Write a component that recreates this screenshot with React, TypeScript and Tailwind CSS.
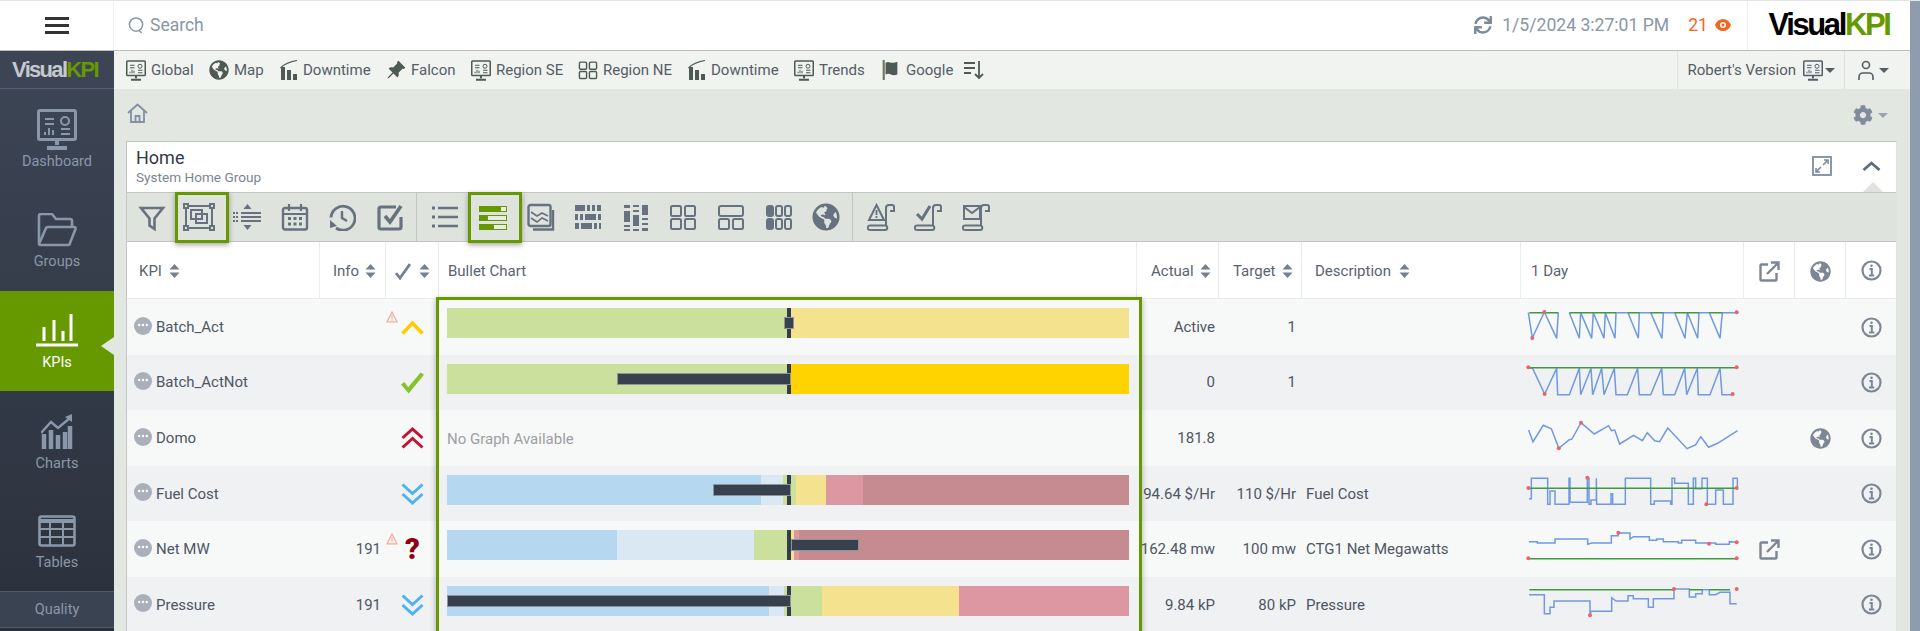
import type { ReactNode } from "react";
import { FaCog, FaGlobeAmericas, FaSync } from "react-icons/fa";
import { BsPinAngleFill } from "react-icons/bs";

const COLS = "grid grid-cols-[193px_66px_53px_698px_82px_83px_219px_223px_51px_51px_50px]";

function Svg({ s, h, vb, children, className }: { s: number; h?: number; vb: string; children: ReactNode; className?: string }) {
  return (
    <svg width={s} height={h ?? s} viewBox={vb} fill="none" stroke="currentColor" strokeWidth={2} className={className}>
      {children}
    </svg>
  );
}

function Monitor({ s, h }: { s: number; h: number }) {
  return (
    <Svg s={s} h={h} vb="0 0 40 41" className="shrink-0">
      <rect x="1.5" y="1.5" width="37" height="29" rx="1.5" strokeWidth="3" />
      <path d="M20 31v5M10 39h20" strokeWidth="4" />
      <path d="M8 10h9M8 15h9M24 20h9M24 25h9" strokeWidth="2" />
      <circle cx="28" cy="12" r="4" strokeWidth="2" />
      <path d="M8 26v-3M12 26v-7M16 26v-5" strokeWidth="2" />
    </Svg>
  );
}

function Bars() {
  return (
    <Svg s={18} h={20} vb="0 0 18 20" className="shrink-0">
      <path d="M3 20V7M9 20V10M15 20v-6" strokeWidth="4" />
      <path d="M0.5 8C4 4 9 2 17 0.5" strokeWidth="1.2" />
    </Svg>
  );
}

function Grid4({ s }: { s: number }) {
  return (
    <Svg s={s} vb="0 0 28 28" className="shrink-0">
      <rect x="2" y="3" width="10" height="10" rx="1.5" />
      <rect x="16" y="3" width="10" height="10" rx="1.5" />
      <rect x="2" y="16" width="10" height="10" rx="1.5" />
      <rect x="16" y="16" width="10" height="10" rx="1.5" />
    </Svg>
  );
}

function Sort() {
  return (
    <svg width="11" height="14" viewBox="0 0 11 14" className="shrink-0 text-[#76808e]" fill="currentColor">
      <path d="M5.5 0 10.5 5.5H.5zM5.5 14 .5 8.5h10z" />
    </svg>
  );
}

function Caret({ className }: { className: string }) {
  return <span className={`h-0 w-0 border-x-[5px] border-t-[5px] border-x-transparent ${className}`} />;
}

function InfoIcon() {
  return (
    <Svg s={21} vb="0 0 21 21" className="text-[#7c8694]">
      <circle cx="10.5" cy="10.5" r="9" strokeWidth="2.2" />
      <path d="M8.5 9h2.3v6M8 15.5h5.2" strokeWidth="2" />
      <circle cx="10.5" cy="5.8" r="1.3" fill="currentColor" stroke="none" />
    </Svg>
  );
}

function External() {
  return (
    <Svg s={21} vb="0 0 21 21" className="text-[#7c8694]">
      <path d="M17.5 12v6.5a1 1 0 0 1-1 1h-14a1 1 0 0 1-1-1v-14a1 1 0 0 1 1-1H9" strokeWidth="2.4" />
      <path d="M8 13 18.5 2.5M12 1.5h7.5V9" strokeWidth="2.4" />
    </Svg>
  );
}

function Warn() {
  return (
    <Svg s={12} vb="0 0 12 12" className="mb-5 shrink-0 text-[#f7a898]">
      <path d="M6 1 11 10.8H1z" strokeWidth="1.2" />
      <path d="M6 4.2v3.6M6 8.6v1" strokeWidth="1.2" />
    </Svg>
  );
}

function Status({ kind }: { kind: string }) {
  if (kind === "up") {
    return (
      <Svg s={23} h={15} vb="0 0 23 15" className="text-[#ffcc00]">
        <path d="M1.5 13.5 11.5 3l10 10.5" strokeWidth="3.6" />
      </Svg>
    );
  }
  if (kind === "check") {
    return (
      <svg width="24" height="22" viewBox="0 0 24 22" className="text-[#85c32a]" fill="currentColor">
        <path d="M0 12.5 3.5 10l4 5.5L20.5 0 24 2.5 8 22z" />
      </svg>
    );
  }
  if (kind === "q") {
    return <span className="font-['Roboto',sans-serif] text-[29px] leading-none font-black text-[#8b0015]">?</span>;
  }
  const up = kind === "dup";
  return (
    <Svg s={23} h={22} vb="0 0 23 22" className={up ? "text-[#c01530]" : "text-[#4fb2f0]"}>
      {up ? <path d="M1.5 11 11.5 2l10 9M1.5 20.5l10-9 10 9" strokeWidth="3" /> : <path d="M1.5 1.5l10 9 10-9M1.5 11l10 9 10-9" strokeWidth="3" />}
    </Svg>
  );
}

function DotsCircle() {
  return (
    <svg width="18" height="18" viewBox="0 0 18 18" className="mb-[3px] shrink-0">
      <circle cx="9" cy="9" r="9" fill="#aab0ba" />
      <circle cx="5.2" cy="8" r="1.2" fill="#fff" />
      <circle cx="9" cy="8" r="1.2" fill="#fff" />
      <circle cx="12.8" cy="8" r="1.2" fill="#fff" />
    </svg>
  );
}

const tools: ReactNode[] = [
  <path key="f" d="M3 5h22l-8.5 10.5V26l-5-3.5v-7z" strokeWidth="2.6" />,
  <g key="s">
    <rect x="3" y="3" width="26" height="22" />
    <rect x="1" y="1" width="4" height="4" fill="#dfe3de" />
    <rect x="27" y="1" width="4" height="4" fill="#dfe3de" />
    <rect x="1" y="23" width="4" height="4" fill="#dfe3de" />
    <rect x="27" y="23" width="4" height="4" fill="#dfe3de" />
    <rect x="8" y="7" width="11" height="9" />
    <rect x="13" y="11" width="11" height="9" />
  </g>,
  <g key="r">
    <path d="M8 10h20M8 14h20M8 18h20" strokeWidth="2.2" />
    <path d="M0 10h5M0 14h5M0 18h5" strokeWidth="2.2" strokeDasharray="2 1" />
    <path d="M14.5 1 10.5 6h8zM14.5 27l-4-5h8z" fill="currentColor" stroke="none" />
  </g>,
  <g key="c">
    <rect x="2" y="5" width="24" height="21.5" rx="2" strokeWidth="2.4" />
    <path d="M8 1v7M20 1v7M2 11h24" strokeWidth="2.2" />
    <path d="M7 15.5h3M12.5 15.5h3M18 15.5h3M7 21h3M12.5 21h3M18 21h3" strokeWidth="3" />
  </g>,
  <g key="h">
    <path d="M8 25A12 12 0 1 0 3 14.5" strokeWidth="2.8" />
    <path d="M2 17l0 8 7-2z" fill="currentColor" stroke="none" />
    <path d="M14 8v7l5 3" strokeWidth="2.4" />
  </g>,
  <g key="k">
    <path d="M25 14v10a2 2 0 0 1-2 2H5a2 2 0 0 1-2-2V6a2 2 0 0 1 2-2h15" strokeWidth="3.2" />
    <path d="M9 13l5 6L25 3" strokeWidth="3.6" />
  </g>,
];

const views: ReactNode[] = [
  <g key="l">
    <path d="M7 5h20M7 14h20M7 23h20" strokeWidth="2.6" />
    <path d="M1 5h3M1 14h3M1 23h3" strokeWidth="2.8" />
  </g>,
  <g key="b" stroke="#669900" strokeWidth="1">
    <rect x="0.5" y="3.5" width="27" height="5" fill="#e8ece6" />
    <rect x="0.5" y="3.5" width="21" height="5" rx="1.5" fill="#669900" />
    <rect x="0.5" y="12.5" width="27" height="5" fill="#e8ece6" />
    <rect x="0.5" y="12.5" width="8" height="5" rx="1.5" fill="#669900" />
    <rect x="0.5" y="21.5" width="27" height="5" fill="#e8ece6" />
    <rect x="0.5" y="21.5" width="14" height="5" rx="1.5" fill="#669900" />
  </g>,
  <g key="t">
    <rect x="1.5" y="2" width="22" height="21" rx="2" strokeWidth="2.4" />
    <path d="M6 26.5h20V7" strokeWidth="2.4" />
    <path d="M4 9l6 4 5-3 6 3M4 15l6 4 5-4 6 3" strokeWidth="1.6" />
  </g>,
  <g key="bc1" fill="currentColor" stroke="none">
    <rect x="1" y="2" width="10" height="6" />
    <rect x="13" y="2" width="3" height="6" />
    <rect x="18" y="2" width="3" height="6" />
    <rect x="23" y="2" width="4" height="6" />
    <rect x="1" y="11" width="3" height="6" />
    <rect x="6" y="11" width="3" height="6" />
    <rect x="11" y="11" width="11" height="6" />
    <rect x="24" y="11" width="3" height="6" />
    <rect x="1" y="20" width="4" height="6" />
    <rect x="7" y="20" width="11" height="6" />
    <rect x="20" y="20" width="3" height="6" />
    <rect x="25" y="20" width="2" height="6" />
  </g>,
  <g key="bc2" fill="currentColor" stroke="none">
    <rect x="2" y="2" width="6" height="3" />
    <rect x="2" y="8" width="6" height="11" />
    <rect x="2" y="22" width="6" height="2" />
    <rect x="2" y="26" width="6" height="2" />
    <rect x="11" y="2" width="6" height="2" />
    <rect x="11" y="7" width="6" height="2" />
    <rect x="11" y="12" width="6" height="11" />
    <rect x="11" y="26" width="6" height="2" />
    <rect x="20" y="2" width="6" height="10" />
    <rect x="20" y="15" width="6" height="2" />
    <rect x="20" y="20" width="6" height="2" />
    <rect x="20" y="25" width="6" height="3" />
  </g>,
  null,
  <g key="g12">
    <rect x="2" y="3" width="24" height="10" rx="2" />
    <rect x="2" y="16" width="10" height="10" rx="1.5" />
    <rect x="16" y="16" width="10" height="10" rx="1.5" />
  </g>,
  <g key="g6">
    <rect x="2" y="3" width="6" height="10" rx="2" fill="currentColor" />
    <rect x="11" y="3" width="6" height="10" rx="2" />
    <rect x="20" y="3" width="6" height="10" rx="2" />
    <rect x="2" y="16" width="6" height="10" rx="2" fill="currentColor" />
    <rect x="11" y="16" width="6" height="10" rx="2" />
    <rect x="20" y="16" width="6" height="10" rx="2" />
  </g>,
];

const scrollBase = "M19 22.5V5a3 3 0 0 1 3-3h3a2 2 0 0 1 2 2v4h-4M3 22.5h15a1.5 1.5 0 0 1 0 4.5H3a1.5 1.5 0 0 1 0-4.5z";
const alerts: ReactNode[] = [
  <g key="a1">
    <path d={scrollBase} strokeWidth="2" />
    <path d="M9.5 2 17 17H2z" fill="#dfe3de" strokeWidth="2" />
    <path d="M9.5 7v5M9.5 13v2" strokeWidth="1.8" />
  </g>,
  <g key="a2">
    <path d={scrollBase} strokeWidth="2" />
    <path d="M3 11l5 5L16 3" strokeWidth="3" />
  </g>,
  <g key="a3">
    <path d={scrollBase} strokeWidth="2" />
    <rect x="2" y="3" width="16" height="13" fill="#dfe3de" />
    <path d="M2 4l8 6 8-6" />
  </g>,
];

function ToolBtn({ children, mark }: { children: ReactNode; mark?: boolean }) {
  return (
    <div className="relative flex h-full w-[47.6px] shrink-0 items-center justify-center text-[#66727f]">
      {children}
      {mark && <span className="absolute -top-px -left-px z-10 h-[51px] w-[54px] border-[3px] border-[#669900] shadow-[0_2px_5px_rgba(0,0,0,0.35)]" />}
    </div>
  );
}

const sideItems = [
  { label: "Dashboard", box: "h-[102px] pt-5 gap-px", icon: <Monitor s={40} h={41} /> },
  {
    label: "Groups",
    box: "h-[100px] pt-[22px] gap-[4px]",
    icon: (
      <Svg s={40} h={34} vb="0 0 40 34">
        <path d="M2 30V3a2 2 0 0 1 2-2h11l4 5h14a2 2 0 0 1 2 2v5" strokeWidth="2.6" />
        <path d="M2 31 9 15a2 2 0 0 1 2-1h26a1.5 1.5 0 0 1 1.5 2L33 30a2 2 0 0 1-2 2H4a2 2 0 0 1-2-1z" strokeWidth="2.6" />
      </Svg>
    ),
  },
  {
    label: "KPIs",
    active: true,
    box: "h-[100px] pt-[23px] gap-[5px]",
    icon: (
      <Svg s={42} h={33} vb="0 0 42 33" className="text-white">
        <path d="M8 27V13M18 27V6M27 27V17M35 27V0M0 31h42" strokeWidth="3" />
      </Svg>
    ),
  },
  {
    label: "Charts",
    box: "h-[100px] pt-[23px] gap-[4px]",
    icon: (
      <Svg s={32} h={35} vb="0 0 32 35">
        <path d="M3 35V20M10 35V16M17 35V21M24 35V18M29 35V12" strokeWidth="4.5" />
        <path d="M0 19 10 8l7 6L29 4" strokeWidth="2.4" stroke="#8a98ad" />
        <path d="M24 3l7-3v8z" fill="currentColor" stroke="none" />
      </Svg>
    ),
  },
  {
    label: "Tables",
    box: "h-[100px] pt-6 gap-[5px]",
    icon: (
      <Svg s={38} h={32} vb="0 0 38 32">
        <rect x="1.5" y="1.5" width="35" height="29" rx="2" strokeWidth="2.6" />
        <path d="M1.5 6h35" strokeWidth="4" />
        <path d="M1.5 14h35M1.5 22h35M12 6v24M25 6v24" strokeWidth="2" />
      </Svg>
    ),
  },
];

const navItems = [
  { t: "Global", i: <Monitor s={20} h={21} />, w: 83 },
  { t: "Map", i: <FaGlobeAmericas size={20} className="shrink-0" />, w: 71 },
  { t: "Downtime", i: <Bars />, w: 106 },
  { t: "Falcon", i: <BsPinAngleFill size={20} className="shrink-0" />, w: 85 },
  { t: "Region SE", i: <Monitor s={20} h={21} />, w: 107 },
  { t: "Region NE", i: <Grid4 s={20} />, w: 110 },
  { t: "Downtime", i: <Bars />, w: 106 },
  { t: "Trends", i: <Monitor s={20} h={21} />, w: 87 },
  { t: "Google", i: (
    <Svg s={20} vb="0 0 20 22" className="shrink-0">
      <path d="M2 0v22" strokeWidth="2.4" stroke="#6a7a5e" />
      <path d="M4 3c3-2 5 0 7 0s4 0 6-1v14c-3 1-5 1-7 0s-4-1-6 0z" fill="currentColor" stroke="none" />
    </Svg>
  ), w: 84 },
];

type Bar = {
  segs: [string, number][];
  actual: [number, number];
};

const GREEN = "bg-[#cbe09c]";
const YELLOW = "bg-[#f5e28f]";
const GOLD = "bg-[#ffd300]";
const BLUE = "bg-[#b5d7f0]";
const LIGHT = "bg-[#dae8f3]";
const PINK = "bg-[#dc97a3]";
const RED = "bg-[#c58b90]";

const rows: {
  name: string;
  info?: string;
  warn?: boolean;
  status: string;
  bar?: Bar;
  actual: string;
  target?: string;
  desc?: string;
  ext?: boolean;
  globe?: boolean;
  spark: ReactNode;
}[] = [
  {
    name: "Batch_Act",
    warn: true,
    status: "up",
    bar: { segs: [[GREEN, 344], [YELLOW, 338]], actual: [337, 10] },
    actual: "Active",
    target: "1",
    spark: (
      <Spark
        top={-3}
        blue="55,38 67,114 103,36 140,115 145,38 M178,38 208,115 212,38 245,115 250,38 282,115 286,38 315,115 318,38 354,38 385,115 388,38 422,38 456,115 460,38 494,38 525,115 532,38 563,115 567,38 598,38 630,115 637,38 680,38"
        green="M58,38H145M178,38H318M354,38H388M422,38H460M494,38H567M598,38H637"
        dots={[[67, 114], [103, 36], [680, 37]]}
      />
    ),
  },
  {
    name: "Batch_ActNot",
    status: "check",
    bar: { segs: [[GREEN, 344], [GOLD, 338]], actual: [170, 174] },
    actual: "0",
    target: "1",
    spark: (
      <Spark
        top={165}
        blue="55,203 68,205 104,282 140,205 143,284 178,284 208,205 212,284 243,205 248,284 275,205 282,284 313,205 318,284 352,284 383,205 388,284 422,284 455,205 460,284 494,284 524,205 530,284 562,205 565,284 600,284 630,205 636,284 668,284"
        green="M55,203H680"
        dots={[[55, 202], [104, 282], [668, 282], [680, 202]]}
      />
    ),
  },
  {
    name: "Domo",
    status: "dup",
    actual: "181.8",
    globe: true,
    spark: (
      <svg width="223" height="56" viewBox="0 0 223 56" fill="none">
        <polyline
          points="7.6,20 12,31.7 22.3,15.3 30.4,18.7 37.8,38.3 48,30 51,29 60,12.7 73.3,24 87.6,15.7 90.4,20.7 93.7,20 98.6,34 112.5,25.3 121.4,30.7 126.3,22.7 133.7,30.7 138.6,31.7 146.8,18 166,38.7 174.5,35 179.8,26.7 187.6,37.3 196.6,33.3 216.6,20.7"
          stroke="#7099e0"
          strokeWidth="1.5"
        />
        <circle cx="60" cy="12.7" r="2" fill="#f0606a" />
        <circle cx="37.8" cy="38.3" r="2" fill="#f0606a" />
      </svg>
    ),
  },
  {
    name: "Fuel Cost",
    status: "ddown",
    bar: { segs: [[BLUE, 314], [LIGHT, 22], [GREEN, 13], [YELLOW, 30], [PINK, 37], [RED, 266]], actual: [266, 78] },
    actual: "94.64 $/Hr",
    target: "110 $/Hr",
    desc: "Fuel Cost",
    spark: (
      <Spark
        top={-10}
        blue="57,88 64,88 64,27 113,27 113,105 120,105 120,65 135,65 135,105 177,105 177,27 180,27 180,99 232,99 232,27 237,27 237,105 243,105 243,92 259,92 259,27 260,105 303,105 303,73 308,73 308,105 346,105 346,27 422,27 422,105 433,105 433,95 482,95 482,105 486,105 486,27 494,27 494,42 535,42 535,105 550,105 550,27 557,27 557,58 576,58 576,27 592,27 592,105 617,105 617,62 640,62 640,105 669,105 669,27 682,27 682,60"
        green="M55,57H680"
        dots={[[55, 56], [232, 25], [589, 105], [680, 56]]}
      />
    ),
  },
  {
    name: "Net MW",
    info: "191",
    warn: true,
    status: "q",
    bar: { segs: [[BLUE, 170], [LIGHT, 137], [GREEN, 37], [YELLOW, 3], [PINK, 5], [RED, 330]], actual: [344, 68] },
    actual: "162.48 mw",
    target: "100 mw",
    desc: "CTG1 Net Megawatts",
    ext: true,
    spark: (
      <Spark
        top={158}
        blue="57,220 82,220 82,224 135,224 135,212 233,212 233,228 245,224 304,224 304,202 325,202 325,194 360,194 360,212 370,205 418,205 418,216 440,216 440,212 460,212 460,220 505,220 505,224 515,224 515,216 557,216 557,224 617,224 617,228 658,228 658,220 680,222"
        green="M55,271H680"
        dots={[[325, 193], [597, 226], [680, 222], [55, 270], [680, 270]]}
      />
    ),
  },
  {
    name: "Pressure",
    info: "191",
    status: "ddown",
    bar: { segs: [[BLUE, 322], [LIGHT, 15], [GREEN, 38], [YELLOW, 137], [PINK, 170]], actual: [0, 344] },
    actual: "9.84 kP",
    target: "80 kP",
    desc: "Pressure",
    spark: (
      <Spark
        top={322}
        blue="57,375 103,375 103,432 120,432 120,413 132,413 132,394 240,394 240,437 243,425 305,425 305,384 318,394 354,394 354,378 370,378 370,387 415,387 415,413 430,413 430,387 492,387 492,358 538,358 538,382 557,382 557,372 577,372 577,360 598,360 598,375 617,375 630,368 660,368 660,402 680,402"
        green="M58,360H492M538,360H577M598,360H660"
        dots={[[492, 358], [240, 437], [680, 358]]}
      />
    ),
  },
];

function Spark({ top, blue, green, dots }: { top: number; blue: string; green: string; dots: number[][] }) {
  const parts = blue.split("M").filter(Boolean);
  return (
    <svg width="223" height="56" viewBox={`33 ${top} 669 168`} fill="none" className="block">
      {parts.map((p) => (
        <polyline key={p} points={p} stroke="#7099e0" strokeWidth="4.5" />
      ))}
      <path d={green} stroke="#3f9a3f" strokeWidth="4.5" />
      {dots.map(([x, y]) => (
        <circle key={`${x}-${y}`} cx={x} cy={y} r="6" fill="#f0606a" />
      ))}
    </svg>
  );
}

function Bullet({ bar }: { bar: Bar }) {
  return (
    <div className="relative mt-[9px] ml-2 flex h-[30px] w-[682px]">
      {bar.segs.map(([c, w], i) => (
        <div key={i} className={c} style={{ width: w }} />
      ))}
      <div className="absolute top-0 left-[340px] h-full w-1 bg-[#343d4a]" />
      <div
        className="absolute top-[9px] h-3 border border-[#8d949c] bg-[#37414e]"
        style={{ left: bar.actual[0], width: bar.actual[1] }}
      />
    </div>
  );
}

function Head({ children, className }: { children: ReactNode; className?: string }) {
  return <div className={`flex items-center border-r border-[#ebedec] pt-[2px] ${className ?? ""}`}>{children}</div>;
}

export default function App() {
  return (
    <div className="flex h-[631px] w-[1920px] overflow-hidden bg-[#e3e7e1] font-['Roboto',sans-serif] text-[15px] text-[#4e5663]">
      <div className="flex min-w-0 flex-1 flex-col">
        {/* top bar */}
        <header className="flex h-[51px] shrink-0 items-center border-t border-b border-t-[#e4e4e4] border-b-[#bdbfbe] bg-white">
          <div className="flex h-full w-[114px] shrink-0 flex-col items-center justify-center gap-[4px] border-r border-[#eeeeee]">
            <span className="h-[3px] w-6 bg-[#333]" />
            <span className="h-[3px] w-6 bg-[#333]" />
            <span className="h-[3px] w-6 bg-[#333]" />
          </div>
          <div className="ml-[14px] flex items-center gap-[5px] text-[17.5px] text-[#8b96a6]">
            <Svg s={17} vb="0 0 17 18">
              <circle cx="8" cy="8" r="7" strokeWidth="1.6" />
              <path d="M11 14l3 3" strokeWidth="1.6" />
            </Svg>
            Search
          </div>
          <div className="ml-auto flex items-center text-[17.6px] text-[#8b96a6]">
            <FaSync size={18} className="text-[#7c8a9c]" />
            <span className="ml-[10px]">1/5/2024 3:27:01 PM</span>
            <span className="ml-[19px] text-[#f26522]">21</span>
            <svg width="16" height="12" viewBox="0 0 16 12" className="mr-4 ml-[7px]">
              <path d="M0 6C3-2 13-2 16 6 13 14 3 14 0 6z" fill="#f26522" />
              <circle cx="8" cy="6" r="3" fill="#fff" />
              <circle cx="8" cy="6" r="1.5" fill="#f26522" />
            </svg>
          </div>
          <div className="flex h-full w-[163px] items-center justify-center border-l border-[#eeeeee] font-['Liberation_Sans',sans-serif] text-[31px] font-bold tracking-[-2.4px] text-black">
            Visual<span className="text-[#669900]">KPI</span>
          </div>
        </header>

        <div className="flex min-h-0 flex-1">
          {/* sidebar */}
          <aside className="flex w-[114px] shrink-0 flex-col bg-gradient-to-b from-[#3d4656] to-[#2b313c] text-[#8a97a9]">
            <div className="flex h-[38px] shrink-0 items-center justify-center border-b border-[#566072] bg-[#3d4555] pr-1 font-['Liberation_Sans',sans-serif] text-[22px] font-bold tracking-[-1.7px] text-[#c4c9cf]">
              Visual<span className="text-[#669900]">KPI</span>
            </div>
            {sideItems.map((it) => (
              <div
                key={it.label}
                className={`relative flex shrink-0 flex-col items-center ${it.box} ${it.active ? "bg-[#669900] text-white" : ""}`}
              >
                {it.icon}
                <span className="text-[14.5px] leading-[21px]">{it.label}</span>
                {it.active && (
                  <span className="absolute top-[46px] right-0 h-0 w-0 border-y-[9px] border-r-[13px] border-y-transparent border-r-[#e3e7e1]" />
                )}
              </div>
            ))}
            <div className="flex h-[37px] shrink-0 items-center justify-center border-y border-[#4f5a6b] bg-[#3a4352] text-[14.5px]">
              Quality
            </div>
          </aside>

          <main className="flex min-w-0 flex-1 flex-col">
            {/* shortcuts */}
            <nav className="flex h-[38px] shrink-0 items-center bg-[#f1f3f0] pl-3 text-[15px] text-[#4d5a55]">
              {navItems.map((n, i) => (
                <div key={i} className="flex items-center gap-[5px] whitespace-nowrap" style={{ width: n.w }}>
                  {n.i}
                  <span className="text-[#555d66]">{n.t}</span>
                </div>
              ))}
              <Svg s={20} vb="0 0 20 20" className="-ml-px">
                <path d="M0 3h11M0 8h11M0 13h7" strokeWidth="2.2" />
                <path d="M15 1v17M11 14l4 4 4-4" strokeWidth="1.8" />
              </Svg>
              <div className="ml-auto flex h-full items-center border-l border-[#dfe2df] pr-[9px] pl-[9px] text-[#555d66]">
                Robert's Version
                <span className="ml-[7px]"><Monitor s={20} h={21} /></span>
                <Caret className="ml-[2px] border-t-[#555d66]" />
              </div>
              <div className="mr-[2px] flex h-full w-[64px] items-center gap-[5px] border-l border-[#dfe2df] pl-[13px] text-[#555d66]">
                <Svg s={16} h={20} vb="0 0 16 20">
                  <circle cx="8" cy="5" r="3.5" strokeWidth="1.6" />
                  <path d="M1 20v-3a4 4 0 0 1 4-4h6a4 4 0 0 1 4 4v3" strokeWidth="1.6" />
                </Svg>
                <Caret className="border-t-[#555d66]" />
              </div>
            </nav>

            {/* breadcrumb */}
            <div className="flex h-[52px] shrink-0 items-start justify-between pt-[14px] pr-[22px] pl-[13px]">
              <Svg s={21} h={20} vb="0 0 21 20" className="text-[#8090a6]">
                <path d="M1 10 10.5 1.5 20 10" strokeWidth="1.8" />
                <path d="M4 8v11h13V8M8.5 19v-6h4v6" strokeWidth="1.8" />
              </Svg>
              <div className="flex items-center gap-[5px] pt-[2px] text-[#808c9c]">
                <FaCog size={20} />
                <Caret className="border-t-[#9aa4b1]" />
              </div>
            </div>

            {/* panel */}
            <section className="mr-[13px] ml-3 flex min-h-0 flex-1 flex-col border-t border-r border-l border-t-[#c4c7c4] border-r-[#dfe2df] border-l-[#c4c7c4] bg-white">
              <div className="relative flex h-[50px] shrink-0 items-center justify-between pr-[15px] pb-[2px] pl-[9px]">
                <div>
                  <div className="text-[18px] leading-[22px] text-[#333a44]">Home</div>
                  <div className="text-[13.6px] leading-[17px] text-[#7b8591]">System Home Group</div>
                </div>
                <div className="flex items-center gap-[30px] text-[#7f8c9e]">
                  <Svg s={20} vb="0 0 20 20">
                    <rect x="1" y="1" width="18" height="18" strokeWidth="1.8" />
                    <path d="M11 9l5-5M12 4h4v4M9 11l-5 5M4 12v4h4" strokeWidth="1.6" />
                  </Svg>
                  <Svg s={19} h={10} vb="0 0 19 10" className="text-[#5f6c7d]">
                    <path d="M1.5 9 9.5 2l8 7" strokeWidth="2.8" />
                  </Svg>
                </div>
                <span className="absolute right-[13px] bottom-0 h-0 w-0 border-x-[10px] border-b-[10px] border-x-transparent border-b-[#dfe3de]" />
              </div>

              {/* toolbar */}
              <div className="flex h-[50px] shrink-0 items-center border-y border-[#c2c5c2] bg-[#dfe3de] pl-px">
                {tools.map((t, i) => (
                  <ToolBtn key={i} mark={i === 1}>
                    <Svg s={i === 1 ? 32 : 28} h={28} vb={i === 1 ? "0 0 32 28" : "0 0 28 28"} className="shrink-0">{t}</Svg>
                  </ToolBtn>
                ))}
                <span className="mr-[5px] ml-[2px] h-full w-px bg-[#c2c5c2]" />
                {views.map((t, i) => (
                  <ToolBtn key={i} mark={i === 1}>
                    {t === null ? <Grid4 s={28} /> : <Svg s={28} vb="0 0 28 28">{t}</Svg>}
                  </ToolBtn>
                ))}
                <ToolBtn>
                  <FaGlobeAmericas size={28} />
                </ToolBtn>
                <span className="mr-[4px] ml-[2px] h-full w-px bg-[#c2c5c2]" />
                {alerts.map((t, i) => (
                  <ToolBtn key={i}>
                    <Svg s={28} vb="0 0 28 28">{t}</Svg>
                  </ToolBtn>
                ))}
              </div>

              {/* table head */}
              <div className={`${COLS} h-[57px] shrink-0 border-b border-[#ebedec] bg-white text-[15px] text-[#5a6270]`}>
                <Head className="gap-[7px] pl-[12px]">KPI <Sort /></Head>
                <Head className="gap-[6px] pl-[13px]">Info <Sort /></Head>
                <Head className="gap-[8px] pl-[9px]">
                  <Svg s={16} h={17} vb="0 0 16 17" className="text-[#76808e]"><path d="M1 10l4 5L15 1" strokeWidth="2.8" /></Svg>
                  <Sort />
                </Head>
                <Head className="pl-[9px]">Bullet Chart</Head>
                <Head className="gap-[6px] pl-[14px]">Actual <Sort /></Head>
                <Head className="gap-[6px] pl-[14px]">Target <Sort /></Head>
                <Head className="gap-[8px] pl-[13px]">Description <Sort /></Head>
                <Head className="pl-[10px]">1 Day</Head>
                <Head className="justify-center"><External /></Head>
                <Head className="justify-center text-[#7c8694]"><FaGlobeAmericas size={21} /></Head>
                <div className="flex items-center justify-center"><InfoIcon /></div>
              </div>

              {/* table body */}
              <div className="relative">
                {rows.map((r, i) => (
                  <div key={r.name} className={`${COLS} h-[55.6px] ${i % 2 === 0 ? "bg-[#f7f9f8]" : "bg-[#f0f1f3]"}`}>
                    <div className="flex items-center gap-[4px] pl-[7px]">
                      <DotsCircle />
                      {r.name}
                    </div>
                    <div className="flex items-center justify-end pr-[5px]">{r.info}</div>
                    <div className="flex items-center">
                      {r.warn ? <Warn /> : <span className="w-3" />}
                      <span className="ml-[3px] flex w-[23px] justify-center"><Status kind={r.status} /></span>
                    </div>
                    <div>
                      {r.bar ? <Bullet bar={r.bar} /> : <div className="mt-[18px] ml-2 text-[#9b9fa3]">No Graph Available</div>}
                    </div>
                    <div className="flex items-center justify-end whitespace-nowrap pr-[4px]">{r.actual}</div>
                    <div className="flex items-center justify-end whitespace-nowrap pr-[6px]">{r.target}</div>
                    <div className="flex items-center pl-1">{r.desc}</div>
                    <div>{r.spark}</div>
                    <div className="flex items-center justify-center">{r.ext && <External />}</div>
                    <div className="flex items-center justify-center text-[#7c8694]">{r.globe && <FaGlobeAmericas size={21} />}</div>
                    <div className="flex items-center justify-center"><InfoIcon /></div>
                  </div>
                ))}
                <span className="absolute -top-[2px] left-[309px] h-[360px] w-[706px] border-[3px] border-[#669900] shadow-[0_2px_6px_rgba(0,0,0,0.3)]" />
              </div>
            </section>
          </main>
        </div>
      </div>
      <div className="mt-px w-[10px] shrink-0 bg-[#8f9cad]" />
    </div>
  );
}
